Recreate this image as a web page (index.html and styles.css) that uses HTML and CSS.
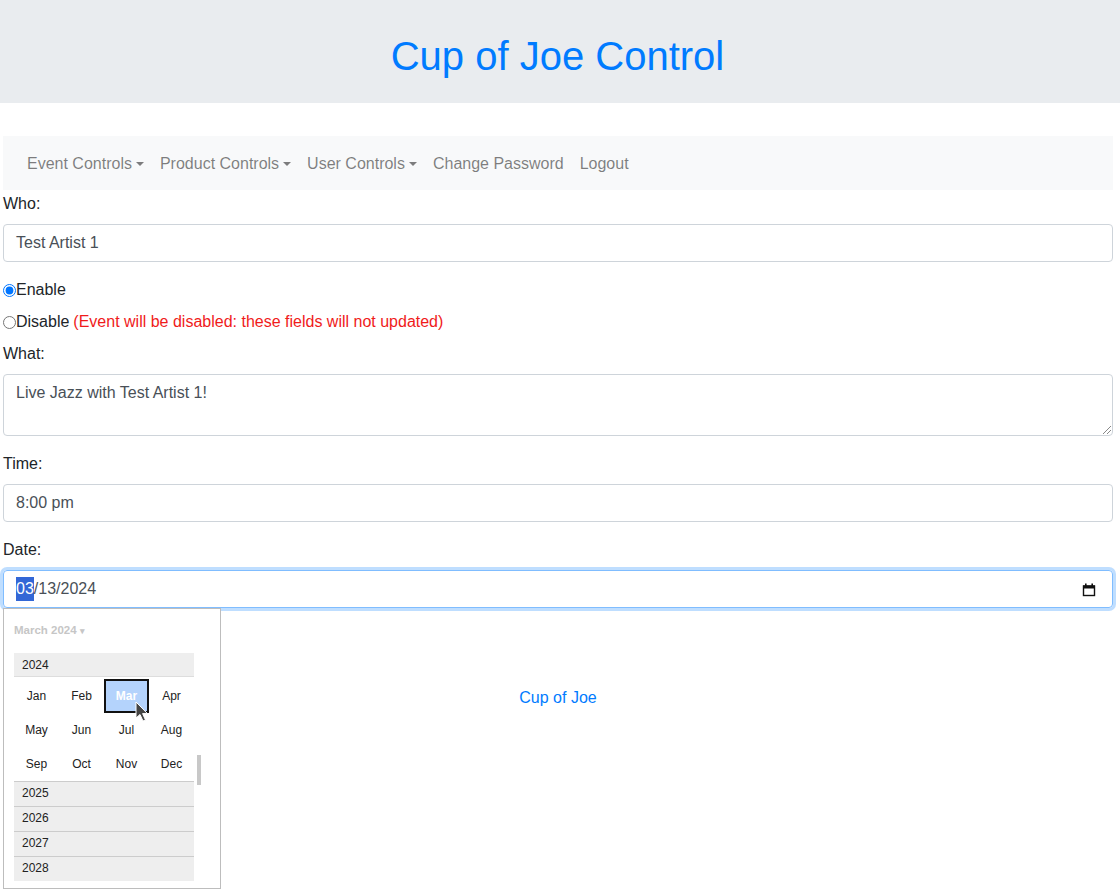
FILE: index.html
```html
<!DOCTYPE html>
<html>
<head>
<meta charset="utf-8">
<link rel="stylesheet" href="styles.css">
</head>
<body>
<header class="hero"><h1 class="hero-title">Cup of Joe Control</h1></header>
<div class="main">
  <nav class="navbar">
    <span class="nav-link dd">Event Controls</span>
    <span class="nav-link dd">Product Controls</span>
    <span class="nav-link dd">User Controls</span>
    <span class="nav-link">Change Password</span>
    <span class="nav-link">Logout</span>
  </nav>
  <form class="form">
    <div class="group">
      <label class="label">Who:</label>
      <div class="input">Test Artist 1</div>
    </div>
    <div class="radio-row"><input type="radio" name="en" class="radio" checked>Enable</div>
    <div class="radio-row"><input type="radio" name="en" class="radio">Disable <span class="warn">(Event will be disabled: these fields will not updated)</span></div>
    <div class="group">
      <label class="label">What:</label>
      <div class="input textarea">Live Jazz with Test Artist 1!<span class="grip"></span></div>
    </div>
    <div class="group">
      <label class="label">Time:</label>
      <div class="input">8:00 pm</div>
    </div>
    <div class="group date-group">
      <label class="label">Date:</label>
      <div class="input focus"><span class="sel">03</span>/13/2024
        <svg class="cal" width="14" height="14" viewBox="0 0 14 14"><rect x="1.5" y="3" width="11" height="9.5" fill="none" stroke="#111" stroke-width="1.4"/><rect x="1" y="2.5" width="12" height="3" fill="#111"/><rect x="3" y="0.5" width="1.6" height="3" fill="#111"/><rect x="9.4" y="0.5" width="1.6" height="3" fill="#111"/></svg>
      </div>
      <div class="picker">
        <div class="picker-head">March 2024 <span class="tri">▾</span></div>
        <div class="picker-list">
          <div class="year">2024</div>
          <div class="months">
            <span>Jan</span><span>Feb</span><span class="cur">Mar</span><span>Apr</span>
            <span>May</span><span>Jun</span><span>Jul</span><span>Aug</span>
            <span>Sep</span><span>Oct</span><span>Nov</span><span>Dec</span>
          </div>
          <div class="year line">2025</div>
          <div class="year line">2026</div>
          <div class="year line">2027</div>
          <div class="year line">2028</div>
        </div>
        <span class="thumb"></span>
        <svg class="cursor" width="14" height="22" viewBox="0 0 14 22"><path d="M1 1 L1 17 L5 13.5 L8 20 L10.5 19 L7.6 12.6 L12.5 12.6 Z" fill="#444" stroke="#fff" stroke-width="1"/></svg>
      </div>
    </div>
  </form>
  <footer class="footer">Cup of Joe</footer>
</div>
</body>
</html>
```
FILE: styles.css
```css
* { box-sizing: border-box; }
html, body { min-height: 893px; }
body {
  margin: 0;
  font-family: "Liberation Sans", Arial, sans-serif;
  font-size: 16px;
  line-height: 24px;
  color: #212529;
  background: #fff;
}
.hero {
  background: #e9ecef;
  height: 103px;
  display: flex;
  align-items: center;
  justify-content: center;
  padding: 8px 5px 0 0;
  margin-bottom: 33px;
}
.hero-title {
  margin: 0;
  font-weight: 400;
  font-size: 40px;
  line-height: 48px;
  color: #007bff;
}
.main { margin: 0 7px 0 3px; padding-bottom: 200px; }
.navbar {
  background: #f8f9fa;
  display: flex;
  padding: 8px 16px 6px;
  height: 54px;
  align-items: center;
}
.nav-link {
  color: rgba(0,0,0,.5);
  padding: 8px;
  line-height: 24px;
}
.nav-link.dd::after {
  content: "";
  display: inline-block;
  margin-left: 4px;
  vertical-align: 3px;
  border-top: 4.8px solid;
  border-left: 4px solid transparent;
  border-right: 4px solid transparent;
}
.form { display: flex; flex-direction: column; margin-top: 2px; }
.group { margin-bottom: 16px; display: flex; flex-direction: column; }
.label { margin-bottom: 8px; display: block; }
.input {
  height: 38px;
  border: 1px solid #ced4da;
  border-radius: 4px;
  padding: 6px 12px;
  color: #495057;
  line-height: 24px;
  position: relative;
}
.textarea { height: 62px; }
.grip {
  position: absolute;
  right: 1px; bottom: 1px;
  width: 8px; height: 8px;
  background: linear-gradient(135deg, transparent 45%, #888 45%, #888 52%, transparent 52%, transparent 70%, #888 70%, #888 77%, transparent 77%);
}
.radio-row { margin-bottom: 8px; display: flex; align-items: center; }
.radio {
  margin: 0;
  width: 13px;
  height: 13px;
  accent-color: #0075ff;
}
.warn { color: #f01b1b; margin-left: 4px; }
.date-group { position: relative; }
.focus {
  border-color: #80bdff;
  box-shadow: 0 0 0 3px rgba(0,123,255,.25);
  display: flex;
  align-items: center;
}
.sel { background: #3367d6; color: #fff; }
.cal { position: absolute; right: 16px; top: 12px; }
.picker {
  position: absolute;
  left: 0;
  top: 100%;
  width: 218px;
  height: 281px;
  background: #fff;
  border: 1px solid #bdbdbd;
  font-size: 12px;
  line-height: 16px;
  color: #222;
  z-index: 5;
  padding: 0 26px 0 10px;
}
.picker-head {
  color: #c6c6c6;
  font-weight: 700;
  font-size: 11.5px;
  margin-top: 13px;
  height: 16px;
  margin-bottom: 15px;
}
.tri { font-size: 9px; }
.year {
  background: #eee;
  height: 25px;
  line-height: 22px;
  padding-left: 8px;
}
.year:first-child { height: 24px; line-height: 24px; border-bottom: 1px solid #ddd; }
.year.line { border-top: 1px solid #ccc; }
.months {
  display: grid;
  grid-template-columns: repeat(4, 45px);
  grid-auto-rows: 34px;
  padding-top: 2px;
}
.months span {
  display: flex;
  align-items: center;
  justify-content: center;
}
.months .cur {
  background: #b4d3fc;
  border: 2px solid #111;
  color: #fff;
  font-weight: 700;
}
.thumb {
  position: absolute;
  left: 193px;
  top: 146px;
  width: 4px;
  height: 30px;
  background: #c8c8c8;
}
.cursor { position: absolute; left: 131px; top: 92px; }
.footer {
  text-align: center;
  color: #007bff;
  margin-top: 62px;
}
```
